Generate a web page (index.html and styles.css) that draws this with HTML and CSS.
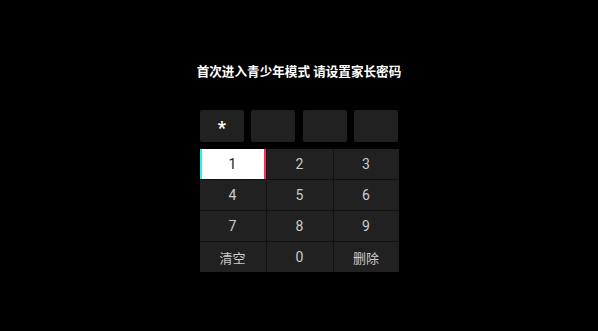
FILE: index.html
```html
<!DOCTYPE html>
<html lang="zh-CN">
<head>
    <meta charset="UTF-8">
    <meta name="viewport" content="width=device-width, initial-scale=1.0">
    <title>青少年模式</title>
    <link rel="stylesheet" href="styles.css">
</head>
<body>
    <div class="lock">
        <div class="lock__title">首次进入青少年模式 请设置家长密码</div>
        <div class="lock__pins">
            <div class="pin">*</div>
            <div class="pin"></div>
            <div class="pin"></div>
            <div class="pin"></div>
        </div>
        <div class="lock__keys">
            <button class="key key--focus">1</button>
            <button class="key">2</button>
            <button class="key">3</button>
            <button class="key">4</button>
            <button class="key">5</button>
            <button class="key">6</button>
            <button class="key">7</button>
            <button class="key">8</button>
            <button class="key">9</button>
            <button class="key key--text">清空</button>
            <button class="key">0</button>
            <button class="key key--text">删除</button>
        </div>
    </div>
</body>
</html>
```

FILE: styles.css
```css
body {
    margin: 0;
    height: 331px;
    background-color: #000;
    font-family: Roboto, "Noto Sans CJK SC", sans-serif;
}

.lock {
    display: flex;
    flex-direction: column;
    align-items: center;
    padding-top: 63px;
}

.lock__title {
    color: #fff;
    font-size: 12.6px;
    font-weight: bold;
    line-height: 18px;
}

.lock__pins {
    display: flex;
    gap: 7.5px;
    margin-top: 29px;
}

.pin {
    width: 44px;
    height: 32px;
    background-color: #212121;
    border-radius: 2px;
    color: #fff;
    font-size: 18px;
    font-weight: bold;
    line-height: 36px;
    text-align: center;
}

.lock__keys {
    display: grid;
    grid-template-columns: 66px 66px 65px;
    grid-auto-rows: 30px;
    gap: 1px;
    margin-top: 7px;
    background-color: #111;
}

.key {
    background-color: #212121;
    border: none;
    padding: 0;
    color: #cccccc;
    font-family: Roboto, "Noto Sans CJK SC", sans-serif;
    font-size: 14px;
}

.key--text {
    font-size: 13px;
}

.key--focus {
    background-color: #fff;
    color: #222;
    border-left: 2px solid #25f4ee;
    border-right: 2px solid #fe2c55;
}
```
